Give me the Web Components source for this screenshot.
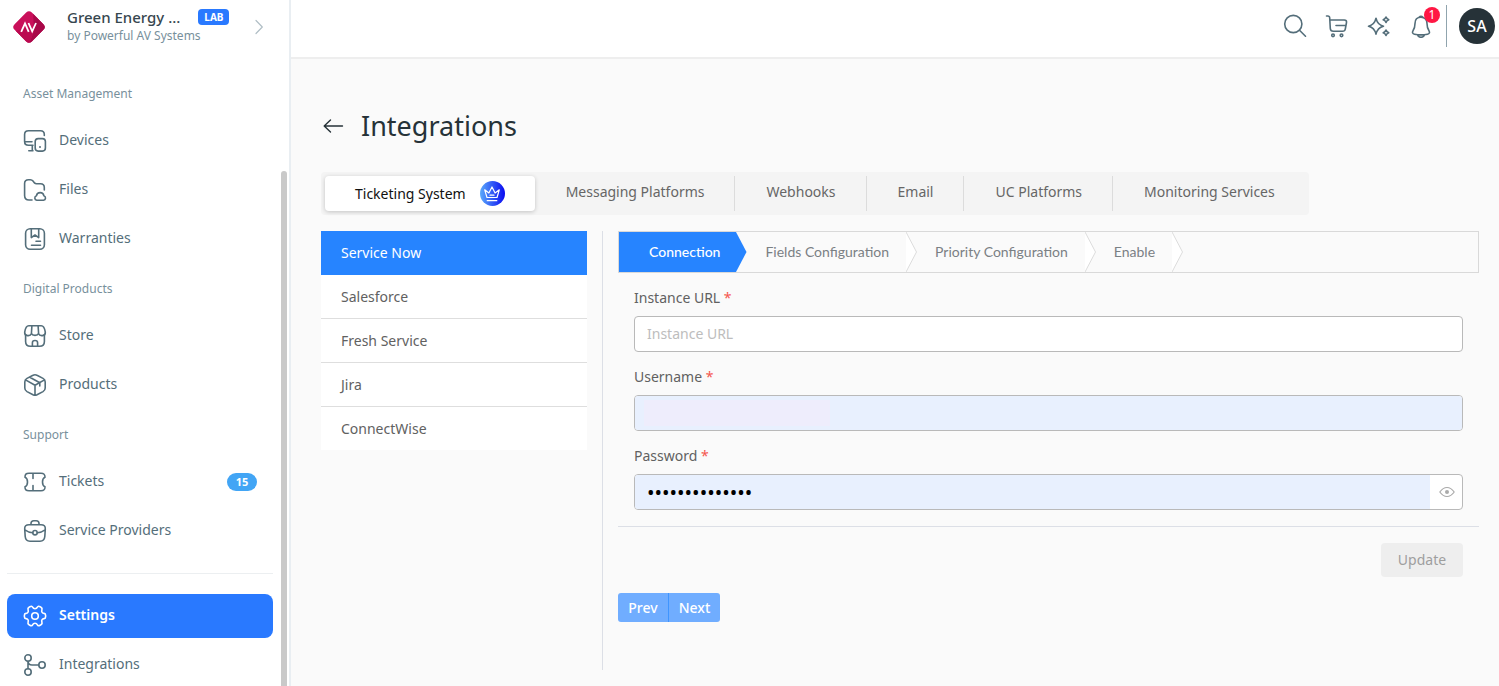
<!DOCTYPE html>
<html lang="en">
<head>
<meta charset="utf-8">
<meta name="viewport" content="width=device-width, initial-scale=1">
<title>Integrations</title>
<style>
  html, body { margin: 0; padding: 0; }
  body { font-family: "Noto Sans", "Open Sans", sans-serif; font-size: 14px; line-height: 20px; background: #fafafa; color: #546e7a; }
</style>
</head>
<body>
<app-shell>
  <side-nav slot="nav">
    <nav-group heading="Asset Management">
      <nav-item icon="devices">Devices</nav-item>
      <nav-item icon="files">Files</nav-item>
      <nav-item icon="warranties">Warranties</nav-item>
    </nav-group>
    <nav-group heading="Digital Products">
      <nav-item icon="store">Store</nav-item>
      <nav-item icon="products">Products</nav-item>
    </nav-group>
    <nav-group heading="Support">
      <nav-item icon="tickets" badge="15">Tickets</nav-item>
      <nav-item icon="briefcase">Service Providers</nav-item>
    </nav-group>
    <nav-group divided>
      <nav-item icon="settings" active>Settings</nav-item>
      <nav-item icon="branch">Integrations</nav-item>
    </nav-group>
  </side-nav>
  <top-bar slot="top"></top-bar>
  <page-title>Integrations</page-title>
  <tab-bar>
    <tab-item active premium>Ticketing System</tab-item>
    <tab-item>Messaging Platforms</tab-item>
    <tab-item>Webhooks</tab-item>
    <tab-item>Email</tab-item>
    <tab-item>UC Platforms</tab-item>
    <tab-item>Monitoring Services</tab-item>
  </tab-bar>
  <split-panel>
    <provider-list slot="list">
      <provider-item active>Service Now</provider-item>
      <provider-item>Salesforce</provider-item>
      <provider-item>Fresh Service</provider-item>
      <provider-item>Jira</provider-item>
      <provider-item>ConnectWise</provider-item>
    </provider-list>
    <step-bar>
      <step-item active>Connection</step-item>
      <step-item>Fields Configuration</step-item>
      <step-item>Priority Configuration</step-item>
      <step-item>Enable</step-item>
    </step-bar>
    <connection-form></connection-form>
    <pager-buttons></pager-buttons>
  </split-panel>
</app-shell>

<script>
const ICONS = {
  devices: '<path d="M21.3 6.5V5.5Q21.3 1.700 17.500 1.700H5.500Q1.600 1.700 1.600 5.500V12.500Q1.600 16.300 5.500 16.300H10M1.800 12.700H9M9.300 16.300V21.600M5.800 21.800H10"/><rect x="12.200" y="9.600" width="10.200" height="12.500" rx="3"/><circle cx="17" cy="18" r="1" fill="currentColor" stroke="none"/>',
  files: '<path d="M9 22H6Q1.600 22 1.600 17.600V5.500Q1.600 1.700 5.500 1.700H7.300Q9 1.700 10 3L11.500 4.900Q12.200 5.700 13.500 5.700H17.500Q21.300 5.700 21.300 9.500V12"/><path d="M13.800 22.200A2.300 2.300 0 0 1 13.500 17.700A3.700 3.700 0 0 1 20.800 17.700A2.300 2.300 0 0 1 20.500 22.200Z"/>',
  warranties: '<rect x="2.600" y="1.700" width="18.800" height="20.600" rx="4.500"/><path d="M8.300 1.900V10.600L12 8L15.700 10.600V1.900M13 14.200H17.500M8.500 18.200H17.500"/>',
  store: '<path d="M2.600 10.500V17.500Q2.600 22.300 7.400 22.300H16.600Q21.400 22.300 21.400 17.500V10.500"/><path d="M5.800 1.700H18.200C21 1.700 21.700 4 22.300 8.200C22.600 12.300 16.800 12.700 15.500 9.500C14.600 12 9.400 12 8.500 9.500C7.200 12.700 1.400 12.300 1.700 8.200C2.300 4 3 1.700 5.800 1.700ZM8.900 1.700L8.400 9.500M15.100 1.700L15.600 9.500M9.400 22.300V18.700Q9.400 16.500 12 16.500T14.600 18.700V22.300"/>',
  products: '<path d="M10 2.300Q12 1.200 14 2.300L20 5.400Q22.200 6.700 22.200 9V15Q22.200 17.300 20 18.600L14 21.800Q12 22.800 10 21.800L4 18.600Q1.800 17.300 1.800 15V9Q1.800 6.700 4 5.400ZM2.500 6.900L12 12.300L21.500 6.900M12 12.500V22.300M6.800 4.300L16.800 9.800V13"/>',
  tickets: '<path d="M6 3.300H18C21 3.300 22 4 22 7.300C20 8 19.500 9.500 19.500 12S20 16 22 16.700C22 20 21 20.700 18 20.700H6C3 20.700 2 20 2 16.700C4 16 4.500 14.500 4.500 12S4 8 2 7.300C2 4 3 3.300 6 3.300ZM10 3.500V8.500M10 15.500V20.500"/>',
  briefcase: '<path d="M8 5.500V4.500Q8 1.700 10.800 1.700H13.200Q16 1.700 16 4.500V5.500M6 5.700H18Q22.500 5.700 22.300 10L21.800 17.500Q21.400 22.200 17 22.200H7Q2.600 22.200 2.200 17.500L1.700 10Q1.500 5.700 6 5.700ZM1.900 10.800Q5.400 13.300 9.700 13.700M22.100 10.800Q18.600 13.300 14.300 13.700"/><circle cx="12" cy="13.700" r="2.200"/>',
  settings: '<circle cx="12" cy="12" r="3.300"/><path d="M9.600 3.200C10.600 5.200 13.400 5.200 14.400 3.200C15 2 16 2.100 17.100 2.700L18 3.300C19.200 4 19.300 4.900 18.900 6C18.200 8 19.400 9.300 21 9.400C22.300 9.500 22.600 10.300 22.600 11.300V12.700C22.600 13.700 22.300 14.500 21 14.600C19.400 14.700 18.200 16 18.900 18C19.300 19.100 19.200 20 18 20.700L17.100 21.300C16 21.900 15 22 14.400 20.800C13.400 18.800 10.600 18.800 9.600 20.800C9 22 8 21.900 6.900 21.300L6 20.700C4.800 20 4.700 19.100 5.100 18C5.800 16 4.600 14.700 3 14.600C1.700 14.500 1.400 13.700 1.400 12.700V11.300C1.400 10.300 1.700 9.500 3 9.400C4.600 9.300 5.800 8 5.100 6C4.700 4.900 4.800 4 6 3.300L6.900 2.700C8 2.100 9 2 9.600 3.200Z"/>',
  branch: '<circle cx="5" cy="5" r="3.200"/><circle cx="5" cy="19" r="3.200"/><circle cx="19" cy="12" r="3.200"/><path d="M5 8.200V15.800M5 8.200Q5.300 12 9 12H15.800"/>',
  search: '<circle cx="10.300" cy="10" r="8.600"/><path d="M16.500 16.200L22.500 22.200"/>',
  cart: '<path d="M1.500 2H2.800Q4.600 2 4.700 3.800L5.300 14.500Q5.500 17.300 8.300 17.300H17.500Q20 17.300 20.300 15L21.500 8.500Q21.800 6 19.300 6H5M20.800 11.500H11"/><circle cx="8" cy="21.300" r="1.300"/><circle cx="16.500" cy="21.300" r="1.300"/>',
  sparkle: '<path d="M9 4.200Q10.500 11 16.500 12.200Q10.500 13.500 9 20.200Q7.500 13.500 1.500 12.200Q7.500 11 9 4.200ZM19 3Q19.700 5 21.800 5.700Q19.700 6.400 19 8.400Q18.300 6.400 16.200 5.700Q18.300 5 19 3ZM19 16Q19.700 18 21.800 18.700Q19.700 19.400 19 21.400Q18.300 19.400 16.200 18.700Q18.300 18 19 16Z"/>',
  bell: '<path d="M12 3.300C8 3.300 6 6 6 9.500C6 13.500 5.500 14.500 4 16.800C3 18.500 3.600 19.800 5.500 20.200Q12 21.500 18.500 20.200C20.400 19.800 21 18.500 20 16.800C18.500 14.500 18 13.500 18 9.500C18 6 16 3.300 12 3.300ZM10 3.300Q12 1.500 14 3.300M8.500 21Q9.300 23.300 12 23.300T15.500 21"/>',
  back: '<path d="M21.500 12H3.500M9.500 6L3.200 12L9.500 18"/>',
  chevron: '<path d="M9 5.500L15.300 12L9 18.500"/>',
  eye: '<path d="M4.800 12Q8 7.500 12 7.500T19.200 12Q16 16.500 12 16.500T4.800 12Z"/><circle cx="12" cy="12" r="2" fill="currentColor" stroke="none"/>',
  crown: '<path d="M7 15.500L4.700 7.800L8.900 11L12 5L15.100 11L19.300 7.800L17 15.500ZM7.200 18.700H16.800M10 13.200H14"/>'
};

function element(name, css, html) {
  const tpl = document.createElement('template');
  customElements.define(name, class extends HTMLElement {
    connectedCallback() {
      if (this.shadowRoot) return;
      const attr = (key) => this.getAttribute(key) || '';
      const has = (key) => this.hasAttribute(key);
      tpl.innerHTML = '<style>*{box-sizing:border-box}' + css + '</style>' + (typeof html === 'function' ? html(attr, has) : html);
      this.attachShadow({ mode: 'open' }).append(tpl.content.cloneNode(true));
    }
  });
}

element('line-icon', `
  :host { display: block; flex: none; width: 24px; height: 24px; }
  svg { display: block; width: 100%; height: 100%; fill: none; stroke: currentColor; stroke-width: var(--stroke, 1.6); stroke-linecap: round; stroke-linejoin: round; }`,
  (a) => `<svg viewBox="0 0 24 24" aria-hidden="true">${ICONS[a('name')]}</svg>`);

element('app-shell', `
  :host { display: grid; grid-template-columns: 291px minmax(0, 1fr); min-height: 100vh; }
  .main { display: flex; flex-direction: column; min-width: 0; }
  main { flex: 1; display: flex; flex-direction: column; padding: 47px 20px 16px 30px; }`,
  `<slot name="nav"></slot><div class="main"><slot name="top"></slot><main><slot></slot></main></div>`);

element('side-nav', `
  :host { display: flex; flex-direction: column; position: sticky; top: 0; height: 100vh; box-sizing: border-box; overflow: hidden; background: #fff; border-right: 2px solid #e9eef2; }
  .body { flex: 1; min-height: 0; display: flex; justify-content: space-between; }
  nav { width: 266px; margin-left: 7px; }
  .thumb { width: 6px; margin: 105px 2px 0 0; border-radius: 3px 3px 0 0; background: #c9c9c9; }`,
  `<brand-card></brand-card><div class="body"><nav><slot></slot></nav><div class="thumb"></div></div>`);

element('brand-card', `
  :host { display: flex; align-items: flex-start; height: 66px; flex: none; box-sizing: border-box; padding: 7px 18px 0 12px; }
  .logo { width: 34px; height: 34px; margin-top: 3px; flex: none; }
  .text { flex: 1; margin-left: 21px; }
  .row { display: flex; align-items: center; gap: 18px; }
  strong { font-size: 15px; line-height: 20px; font-weight: 500; color: #37474f; white-space: nowrap; }
  .lab { background: #2979ff; color: #fff; font-size: 10px; line-height: 16px; font-weight: 700; width: 31px; text-align: center; border-radius: 4px; }
  small { display: block; font-size: 12px; line-height: 18px; color: #78909c; }
  line-icon { --stroke: 1.2; color: #b0bec5; margin-top: 8px; }
  button { all: unset; }`,
  `<svg class="logo" viewBox="0 0 34 34" role="img" aria-label="AV">
     <defs><clipPath id="c"><rect x="4.800" y="4.800" width="24.400" height="24.400" rx="4" transform="rotate(45 17 17)"/></clipPath></defs>
     <g clip-path="url(#c)"><path fill="#c9105a" d="M0 0H34V34H0Z"/><path fill="#a80848" d="M21 0L34 10V34H17L22 21Z"/><path fill="#bb0a50" d="M17 17L22 21L17 34H0V22Z"/></g>
     <path d="M9.200 21.800L13 13.500L16.700 21.800M16.500 13L20.200 21.300L24 13" fill="none" stroke="#fff" stroke-width="1.800"/></svg>
   <div class="text"><div class="row"><strong>Green Energy ...</strong><span class="lab">LAB</span></div><small>by Powerful AV Systems</small></div>
   <button aria-label="Switch account"><line-icon name="chevron"></line-icon></button>`);

element('nav-group', `
  :host { display: block; }
  h2 { margin: 20px 0 17px 16px; font-size: 12px; line-height: 16px; font-weight: 400; color: #78909c; }
  hr { margin: 20px 0; border: 0; border-top: 1px solid #eceff1; }
  .items { display: flex; flex-direction: column; gap: 5px; }`,
  (a, has) => (has('divided') ? '<hr>' : `<h2>${a('heading')}</h2>`) + '<div class="items"><slot></slot></div>');

element('nav-item', `
  :host { display: block; }
  a { display: flex; align-items: center; gap: 12px; height: 44px; padding: 0 16px; border-radius: 8px; color: #546e7a; text-decoration: none; }
  .text { flex: 1; padding-bottom: 2px; }
  :host([active]) a { background: #2979ff; color: #fff; font-weight: 600; }
  .badge { width: 30px; line-height: 18px; border-radius: 9px; background: #42a5f5; color: #fff; font-size: 11px; font-weight: 700; text-align: center; }`,
  (a) => `<a href="#"><line-icon name="${a('icon')}"></line-icon><span class="text"><slot></slot></span>${a('badge') && `<span class="badge">${a('badge')}</span>`}</a>`);

element('top-bar', `
  :host { display: flex; align-items: center; justify-content: flex-end; height: 59px; box-sizing: border-box; padding: 0 4px 5px 0; background: #fff; border-bottom: 2px solid #eee; flex: none; }
  .icons { display: flex; gap: 18px; }
  button { all: unset; position: relative; color: #546e7a; }
  .count { position: absolute; right: -7px; top: -7px; width: 16px; line-height: 16px; border-radius: 8px; background: #ff1744; color: #fff; font-size: 12px; text-align: center; }
  .rule { width: 1px; height: 42px; margin: 0 12px 0 13px; background: #90a4ae; }
  .avatar { width: 36px; line-height: 36px; border-radius: 50%; background: #263238; color: #fff; font-size: 16px; font-weight: 500; text-align: center; }`,
  `<div class="icons">
     <button aria-label="Search"><line-icon name="search"></line-icon></button>
     <button aria-label="Cart"><line-icon name="cart"></line-icon></button>
     <button aria-label="Assistant"><line-icon name="sparkle"></line-icon></button>
     <button aria-label="Notifications"><line-icon name="bell"></line-icon><span class="count">1</span></button>
   </div><div class="rule"></div><button class="avatar">SA</button>`);

element('page-title', `
  :host { display: flex; align-items: center; gap: 16px; height: 40px; margin-bottom: 26px; color: #263238; }
  button { all: unset; }
  h1 { margin: 0; font-size: 27px; line-height: 40px; font-weight: 400; }
  line-icon { --stroke: 1.4; }`,
  `<button aria-label="Back"><line-icon name="back"></line-icon></button><h1><slot></slot></h1>`);

element('tab-bar', `
  :host { display: flex; align-self: flex-start; height: 43px; box-sizing: border-box; padding: 4px; margin-bottom: 16px; background: #f4f4f4; border-radius: 4px; }`,
  `<slot></slot>`);

element('tab-item', `
  :host { display: block; border-right: 1px solid #dcdcdc; }
  :host(:last-child), :host([active]) { border-right: 0; }
  button { all: unset; box-sizing: border-box; display: flex; align-items: center; gap: 14px; height: 35px; padding: 0 30px 4px 31px; color: #666; white-space: nowrap; }
  :host([active]) button { padding: 0 30px; background: #fff; color: #111; border-radius: 4px; box-shadow: 0 1px 4px rgba(0,0,0,.2); }
  .premium { width: 25px; height: 25px; border-radius: 50%; background: linear-gradient(90deg, #5aa9fb, #0a0af0); color: #fff; display: grid; place-items: center; }
  line-icon { --stroke: 1.2; }`,
  (a, has) => `<button role="tab"><slot></slot>${has('premium') ? '<span class="premium"><line-icon name="crown"></line-icon></span>' : ''}</button>`);

element('split-panel', `
  :host { flex: 1; display: grid; grid-template-columns: 266px minmax(0, 1fr); column-gap: 15px; }
  .detail { border-left: 1px solid #dcdfe6; padding-left: 15px; }`,
  `<slot name="list"></slot><section class="detail"><slot></slot></section>`);

element('provider-list', `:host { display: block; }`, `<slot></slot>`);

element('provider-item', `
  :host { display: block; border-bottom: 1px solid #dedede; background: #fff; }
  :host(:last-child) { border-bottom: 0; }
  :host([active]) { background: #2684ff; border-color: #2684ff; }
  button { all: unset; box-sizing: border-box; display: block; width: 100%; height: 43px; padding: 0 20px; line-height: 41px; color: #616161; }
  :host([active]) button { color: #fff; }`,
  `<button><slot></slot></button>`);

element('step-bar', `
  :host { display: flex; height: 42px; box-sizing: border-box; border: 1px solid #d9d9d9; font-family: Lato, sans-serif; }`,
  `<slot></slot>`);

element('step-item', `
  :host { display: flex; }
  button { all: unset; padding: 0 17px 0 18px; line-height: 40px; color: #7a8084; white-space: nowrap; }
  svg { display: block; width: 11px; height: 40px; fill: #fff; stroke: #dcdcdc; }
  :host(:first-child) button { padding: 0 16px 0 30px; }
  :host([active]) button { background: #2684ff; color: #fff; font-weight: 500; }
  :host([active]) svg { fill: #2684ff; stroke: none; }`,
  `<button><slot></slot></button><svg viewBox="0 0 11 40" aria-hidden="true"><path d="M0 0L10.500 20L0 40"/></svg>`);

element('form-field', `
  :host { display: block; margin-bottom: 16px; }
  label { display: block; line-height: 18px; margin-bottom: 9px; color: #616161; }
  label span { color: #f5564e; }
  .box { display: flex; height: 36px; border: 1px solid #b9b9b9; border-radius: 4px; background: #fff; overflow: hidden; }
  input { flex: 1; min-width: 0; border: 0; outline: 0; padding: 0 12px; background: none; font: inherit; color: #000; }
  input[type=password] { font-size: 20px; }
  input::placeholder { color: #bdbdbd; opacity: 1; }
  :host([filled]) input { background: #e8f0fe; }
  :host([masked]) input { background: linear-gradient(#eeedfc, #eeedfc) 9px 4px / 186px 26px no-repeat #e8f0fe; }
  button { all: unset; box-sizing: border-box; width: 32px; padding-left: 2px; display: grid; place-items: center; color: #aaa; }
  line-icon { --stroke: 1.2; }`,
  (a) => `<label for="f">${a('label')} <span>*</span></label><div class="box"><input id="f" type="${a('type') || 'text'}" placeholder="${a('placeholder')}" value="${a('value')}">${a('type') === 'password' ? '<button aria-label="Show password"><line-icon name="eye"></line-icon></button>' : ''}</div>`);

element('connection-form', `
  :host { display: block; }
  form { padding: 16px 16px 0; }
  footer { display: flex; justify-content: flex-end; border-top: 1px solid #dcdfe6; padding: 16px; }
  .update { height: 34px; padding: 0; width: 82px; border: 0; border-radius: 4px; background: #eee; color: #9e9e9e; font: inherit; }`,
  `<form>
     <form-field label="Instance URL" placeholder="Instance URL"></form-field>
     <form-field label="Username" filled masked></form-field>
     <form-field label="Password" type="password" value="integration-sn" filled></form-field>
   </form>
   <footer><button class="update" disabled>Update</button></footer>`);

element('pager-buttons', `
  :host { display: flex; }
  button { height: 29px; width: 51px; border: 0; background: #70adff; color: #fff; font: inherit; font-weight: 500; padding: 0; }
  button:first-of-type { border-radius: 3px 0 0 3px; border-right: 1px solid #3f95ff; }
  button:last-of-type { border-radius: 0 3px 3px 0; }`,
  `<button>Prev</button><button>Next</button>`);
</script>
</body>
</html>
